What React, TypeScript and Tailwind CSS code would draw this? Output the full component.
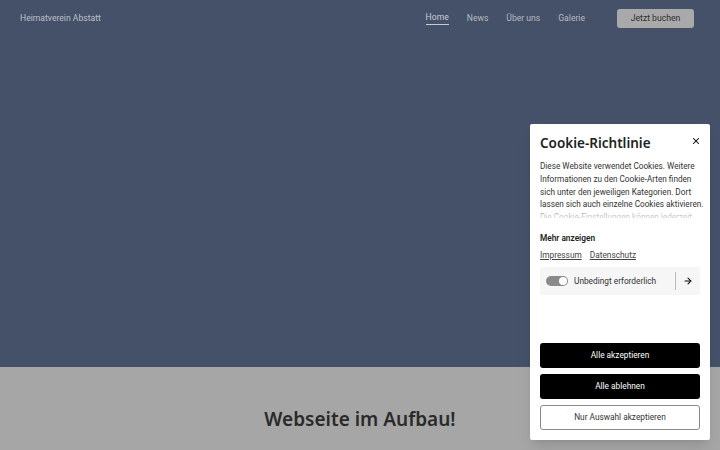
import { X, ArrowRight } from 'lucide-react';

const body = { fontFamily: 'Roboto, "Liberation Sans", sans-serif' };
const display = { fontFamily: '"Noto Sans", "DejaVu Sans", sans-serif' };

function Header() {
  return (
    <header className="flex h-[36px] items-center justify-between pl-5 pr-[26px]">
      <span className="text-[8.6px] text-[#bcc0c8]">Heimatverein Abstatt</span>
      <div className="flex items-center">
        <nav className="flex items-center gap-[18px] text-[8.6px] text-[#b6bac4]">
          <a className="border-b border-[#c8ccd4] pb-[1px] text-[#c8ccd4]">Home</a>
          <a>News</a>
          <a>Über uns</a>
          <a>Galerie</a>
        </nav>
        <button className="ml-8 h-[19px] w-[77px] rounded-[3px] bg-[#a9a9a9] text-[8.6px] text-[#2e2e2e]">
          Jetzt buchen
        </button>
      </div>
    </header>
  );
}

function CookieBanner() {
  return (
    <div className="absolute left-[530px] top-[124px] flex h-[316px] w-[180px] flex-col rounded-[2px] bg-white px-[10px] pt-[9px] shadow-lg">
      <div className="flex items-start justify-between">
        <h2 className="text-[13.5px] font-semibold text-[#222]" style={display}>
          Cookie-Richtlinie
        </h2>
        <X className="mr-[-1px] mt-[3px] h-[10px] w-[10px] text-black" strokeWidth={2.5} />
      </div>
      <div className="relative mr-[-4px] mt-[7px] h-[58px] overflow-hidden text-[8.2px] leading-[12.7px] text-[#333]">
        <p>
          Diese Website verwendet Cookies. Weitere Informationen zu den Cookie-Arten finden sich
          unter den jeweiligen Kategorien. Dort lassen sich auch einzelne Cookies aktivieren. Die
          Cookie-Einstellungen können jederzeit geändert werden.
        </p>
        <div className="absolute inset-x-0 bottom-0 h-[10px] bg-gradient-to-b from-white/40 to-white/80" />
      </div>
      <div className="mt-[14px] text-[8.3px] font-semibold text-[#222]">Mehr anzeigen</div>
      <div className="mt-[4px] flex gap-[8px] text-[8.3px] text-[#444]">
        <a className="underline">Impressum</a>
        <a className="underline">Datenschutz</a>
      </div>
      <div className="mt-[6px] flex h-[28px] items-center rounded-[2px] bg-[#f6f6f6] pl-[6px] pr-[7px]">
        <div className="flex h-[10px] w-[22px] items-center justify-end rounded-full bg-[#8a8a8a] pr-[1px]">
          <div className="h-[8px] w-[8px] rounded-full bg-white" />
        </div>
        <span className="ml-[6px] flex-1 text-[8.3px] text-[#333]">Unbedingt erforderlich</span>
        <div className="mr-[7px] h-[18px] w-px bg-[#bbb]" />
        <ArrowRight className="h-[10px] w-[10px] text-black" strokeWidth={2.5} />
      </div>
      <div className="mt-[48px] flex flex-col gap-[6px] text-[8.3px]">
        <button className="h-[25px] rounded-[3px] bg-black text-white">Alle akzeptieren</button>
        <button className="h-[25px] rounded-[3px] bg-black text-white">Alle ablehnen</button>
        <button className="h-[25px] rounded-[3px] border border-[#888] bg-white text-[#333]">
          Nur Auswahl akzeptieren
        </button>
      </div>
    </div>
  );
}

export default function App() {
  return (
    <div className="relative h-[450px] w-[720px] overflow-hidden bg-[#a6a6a6]" style={body}>
      <section className="h-[367px] bg-[#445169]">
        <Header />
      </section>
      <section className="flex justify-center pt-[38px]">
        <h1 className="text-[19px] font-semibold text-[#2a2a2a]" style={display}>
          Webseite im Aufbau!
        </h1>
      </section>
      <CookieBanner />
    </div>
  );
}
